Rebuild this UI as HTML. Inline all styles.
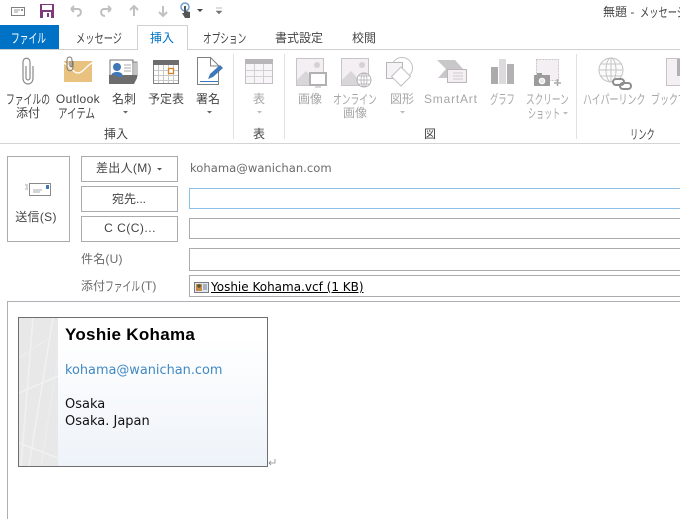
<!DOCTYPE html>
<html lang="ja"><head><meta charset="utf-8">
<style>
html,body{margin:0;padding:0;background:#fff}
#p{position:relative;width:680px;height:519px;overflow:hidden;background:#fff;font-family:"Liberation Sans","Noto Sans CJK JP",sans-serif;font-size:12px;color:#444}
.t{position:absolute;white-space:nowrap;line-height:15px}
.c{text-align:center;transform:translateX(-50%)}
.g{color:#a6a6a6}
.s{transform-origin:0 0;font-size:13px}
.d{font-family:"DejaVu Sans","Noto Sans CJK JP",sans-serif}
.b{position:absolute;box-sizing:border-box;border:1px solid #ababab;background:#fff}
.l{position:absolute;background:#e1e1e1;width:1px;top:54px;height:85px}
svg{position:absolute;left:0;top:0}
</style></head><body><div id="p">
<svg width="680" height="150" viewBox="0 0 680 150" fill="none">
<!-- QAT -->
<rect x="11.500" y="7.500" width="13" height="8" stroke="#808080"/><path d="M14 10h6M14 12h4" stroke="#999"/><rect x="21" y="9" width="2" height="2" fill="#999"/>
<rect x="40" y="4" width="14" height="14" fill="#80397b"/><rect x="42" y="5" width="10" height="5" fill="#fff"/><rect x="43" y="12" width="8" height="6" fill="#fff"/><rect x="47" y="13" width="2" height="4" fill="#80397b"/>
<path d="M71 9h7c4 0 4 7-1 7M71 9l3-3M71 9l3 3" stroke="#c0c0c0" stroke-width="2"/>
<path d="M111 9h-7c-4 0-4 7 1 7M111 9l-3-3M111 9l-3 3" stroke="#c0c0c0" stroke-width="2"/>
<path d="M134 16V7M130 10l4-4 4 4" stroke="#c0c0c0" stroke-width="2"/>
<path d="M163 6v9M159 12l4 4 4-4" stroke="#c0c0c0" stroke-width="2"/>
<circle cx="185" cy="7" r="4" stroke="#6f9fd0" stroke-width="1.500"/><path d="M184 6h2v5l4 1v6h-5l-3-5h2z" fill="#555"/>
<path d="M197 9h6l-3 3z" fill="#444"/><path d="M216 8h6M216 11h6l-3 3z" fill="#777" stroke="#777" stroke-width=".5"/>
<!-- tabs -->
<rect x="0" y="25" width="59" height="25" fill="#0072c6"/>
<path d="M0 49.500H137.500V25.500H187.500V49.500H680" stroke="#d0d0d0"/>
<path d="M0 143.500H680" stroke="#d4d4d4"/>
<!-- clip -->
<path d="M26 66V78c0 2.500 4 2.500 4 0V62c0-5-7-5-7 0V78c0 8 10 8 10 0V66" stroke="#8a8a8a" stroke-width="1.200"/>
<!-- Outlook -->
<path d="M64 61h28v21H64z" fill="#e9c27f"/><path d="M64 63c9 5 9 10 14 10 5 0 8-7 14-10" stroke="#fff" stroke-width="1.300"/>
<path d="M73 61v6c0 5-6 5-6 0v-7c0-4 5-4 5 0v6c0 1-2 1-2 0v-5" stroke="#777" fill="#fff" fill-opacity=".3"/>
<!-- card -->
<rect x="110" y="60" width="23" height="17" fill="#fff" stroke="#777"/><path d="M132 62h3v16h-2M135 62h2v15" stroke="#888"/>
<circle cx="117" cy="67" r="4" fill="#3f78b8"/><path d="M111 77c0-4 3-5 6-5s6 1 6 5z" fill="#3f78b8"/><path d="M124 65h7M124 68h7M124 71h7" stroke="#aaa"/>
<path d="M109 75h7l1 2h5l1-2h14v3l-3 6h-25z" fill="#6d6d6d"/>
<!-- calendar -->
<rect x="153.500" y="60.500" width="25" height="23" fill="#fff" stroke="#808080"/><rect x="153" y="60" width="26" height="5" fill="#6d6d6d"/>
<path d="M158.500 65v18M163.500 65v18M168.500 65v18M173.500 65v18M154 70.500h24M154 75.500h24M154 80.500h24" stroke="#c8c8c8"/>
<rect x="168.500" y="68.500" width="5" height="5" fill="#fff" stroke="#d98324" stroke-width="1.300"/>
<!-- signature -->
<path d="M197.500 84.500V57.500H210.500L218.500 65.500V84.500Z" fill="#fff" stroke="#808080"/><path d="M210.500 58v8h8" stroke="#808080"/>
<path d="M200 81.500h18" stroke="#3f78b8"/><path d="M208 79l2-5 10-9 3 3-10 9z" fill="#3f78b8"/>
<!-- table -->
<rect x="245.500" y="59.500" width="27" height="24" fill="#f7f5f7" stroke="#c2c0c2"/><rect x="245" y="59" width="28" height="5" fill="#b8b6b8"/>
<path d="M254.500 64v19M263.500 64v19M246 70.500h26M246 76.500h26" stroke="#d2d0d2"/>
<!-- image -->
<rect x="296.500" y="58.500" width="27" height="27" fill="#f3eff3" stroke="#c6c4c6"/><circle cx="317" cy="65" r="3" fill="#d4d2d4"/><path d="M297 85v-5l9-9 9 10v4z" fill="#d8d6d8"/>
<rect x="310" y="73" width="16" height="12" fill="#fff" stroke="#b2b0b2" stroke-width="2"/><path d="M315 87h6" stroke="#b2b0b2"/>
<rect x="341.500" y="58.500" width="27" height="27" fill="#f3eff3" stroke="#c6c4c6"/><circle cx="362" cy="65" r="3" fill="#d4d2d4"/><path d="M342 85v-5l9-9 9 10v4z" fill="#d8d6d8"/>
<circle cx="364" cy="80" r="7" fill="#fff" stroke="#b2b0b2"/><path d="M357 80h14M364 73v14M359 76h10M359 84h10" stroke="#b2b0b2" stroke-width=".8"/><ellipse cx="364" cy="80" rx="3" ry="7" stroke="#b2b0b2" stroke-width=".8"/>
<!-- shapes -->
<circle cx="402" cy="68" r="10.500" fill="#fff" stroke="#c2c0c2"/><rect x="386.500" y="62.500" width="16" height="16" fill="#f5f3f5" stroke="#b8b6b8"/><path d="M401 67l9.500 9.500-9.500 9.500-9.500-9.500z" fill="#fff" stroke="#c2c0c2"/>
<!-- smartart -->
<path d="M437 60h18l9 10h-13v8h-13l8-9z" fill="#c9c7c9"/><rect x="447.500" y="69.500" width="19" height="13" fill="#f3eff3" stroke="#b8b6b8"/><path d="M453 73h10M453 76h10M453 79h10" stroke="#ccc"/>
<!-- chart -->
<rect x="491" y="67" width="7" height="17" fill="#ababab"/><rect x="499" y="59" width="7" height="25" fill="#dcdadc"/><rect x="507" y="64" width="7" height="20" fill="#b2b2b2"/>
<!-- screenshot -->
<rect x="536.500" y="59.500" width="22" height="21" fill="#f3eff3" stroke="#c6c4c6" stroke-dasharray="2 1"/>
<rect x="534" y="75" width="16" height="11" fill="#9c9c9c"/><rect x="537" y="73" width="5" height="3" fill="#9c9c9c"/><circle cx="542" cy="81" r="2.800" fill="#e8e8e8" stroke="#fff"/>
<path d="M554 83h7M557.500 79v7" stroke="#a8a8a8" stroke-width="1.600"/>
<!-- link -->
<circle cx="611" cy="70" r="12" fill="#fbfbfb" stroke="#c4c4c4"/><ellipse cx="611" cy="70" rx="5" ry="12" stroke="#c4c4c4"/><path d="M599 70h24M611 58v24M601 64h20M601 76h20" stroke="#c4c4c4"/>
<rect x="613" y="79" width="11" height="6" rx="3" fill="#fff" stroke="#8d8d8d" stroke-width="2"/><rect x="620" y="83" width="11" height="6" rx="3" fill="none" stroke="#8d8d8d" stroke-width="2"/>
<rect x="666.500" y="58.500" width="20" height="27" fill="#f3eff3" stroke="#c6c4c6"/><rect x="677" y="59" width="5" height="17" fill="#b2b0b2"/>
<!-- dropdown arrows -->
<path d="M123 111h5l-2.500 2.500zM207 111h5l-2.500 2.500z" fill="#666"/>
<path d="M257 111h5l-2.500 2.500zM400 111h5l-2.500 2.500zM563 112h5l-2.500 2.500z" fill="#bbb"/>
</svg>

<div class="t" style="left:603px;top:5px">無題 -</div>
<div class="t s" style="left:640px;top:5px;transform:scaleX(.71)">メッセージ</div>
<div class="t s" style="left:11px;top:31px;color:#fff;transform:scaleX(.674)">ファイル</div>
<div class="t s" style="left:76px;top:31px;transform:scaleX(.71)">メッセージ</div>
<div class="t" style="left:150px;top:31px;color:#0072c6">挿入</div>
<div class="t s" style="left:203px;top:31px;transform:scaleX(.665)">オプション</div>
<div class="t" style="left:275px;top:31px">書式設定</div>
<div class="t" style="left:352px;top:31px">校閲</div>

<div class="t s" style="left:6px;top:92px;transform:scaleX(.677)">ファイルの</div>
<div class="t c" style="left:28px;top:106px">添付</div>
<div class="t c" style="left:78px;top:92px;letter-spacing:.4px">Outlook</div>
<div class="t s" style="left:58px;top:106px;transform:scaleX(.73)">アイテム</div>
<div class="t c" style="left:124px;top:92px">名刺</div>
<div class="t c" style="left:166px;top:92px">予定表</div>
<div class="t c" style="left:208px;top:92px">署名</div>
<div class="t c g" style="left:259px;top:92px">表</div>
<div class="t c g" style="left:310px;top:92px">画像</div>
<div class="t s g" style="left:333px;top:92px;transform:scaleX(.674)">オンライン</div>
<div class="t c g" style="left:355px;top:106px">画像</div>
<div class="t c g" style="left:402px;top:92px">図形</div>
<div class="t g" style="left:424px;top:92px;letter-spacing:.8px">SmartArt</div>
<div class="t s g" style="left:490px;top:92px;transform:scaleX(.637)">グラフ</div>
<div class="t s g" style="left:526px;top:92px;transform:scaleX(.665)">スクリーン</div>
<div class="t s g" style="left:528px;top:106px;transform:scaleX(.62)">ショット</div>
<div class="t s g" style="left:583px;top:92px;transform:scaleX(.69)">ハイパーリンク</div>
<div class="t s g" style="left:651px;top:92px;transform:scaleX(.69)">ブックマーク</div>
<div class="t c" style="left:116px;top:127px">挿入</div>
<div class="t c" style="left:259px;top:127px">表</div>
<div class="t c" style="left:430px;top:127px">図</div>
<div class="t s" style="left:630px;top:127px;transform:scaleX(.637)">リンク</div>
<div class="l" style="left:233px"></div><div class="l" style="left:284px"></div><div class="l" style="left:576px"></div>

<div class="b" style="left:7px;top:156px;width:63px;height:86px"></div>
<svg width="70" height="242" viewBox="0 0 70 242" fill="none"><rect x="29.500" y="183.500" width="21" height="12" fill="#fff" stroke="#8a8a8a"/><path d="M33 190h9M33 192h7M25 185h3M26 187h2M25 189h3" stroke="#aaa"/><rect x="46" y="185" width="3" height="4" fill="#3f78b8"/></svg>
<div class="t c" style="left:36px;top:210px;letter-spacing:.3px">送信(S)</div>
<div class="b" style="left:81px;top:156px;width:97px;height:26px"></div>
<div class="t" style="left:96px;top:161px;letter-spacing:.3px">差出人(M)</div>
<svg width="170" height="175" viewBox="0 0 170 175"><path d="M157 168h5l-2.500 2.500z" fill="#555"/></svg>
<div class="b" style="left:81px;top:186px;width:97px;height:26px"></div>
<div class="t c" style="left:129px;top:192px">宛先...</div>
<div class="b" style="left:81px;top:216px;width:97px;height:26px"></div>
<div class="t c" style="left:130px;top:221px;letter-spacing:.5px">C C(C)...</div>
<div class="t" style="left:81px;top:252px;color:#6a6a6a;letter-spacing:.2px">件名(U)</div>
<div class="t" style="left:81px;top:279px;color:#6a6a6a">添付</div>
<div class="t s" style="left:105px;top:279px;color:#6a6a6a;transform:scaleX(.674)">ファイル</div>
<div class="t" style="left:141px;top:279px;color:#6a6a6a">(T)</div>
<div class="t d" style="left:190px;top:161px;color:#6a6a6a;font-size:11.600px">kohama@wanichan.com</div>
<div class="b" style="left:189px;top:188px;width:500px;height:21px;border-color:#8cc0e8"></div>
<div class="b" style="left:189px;top:218px;width:500px;height:21px"></div>
<div class="b" style="left:189px;top:248px;width:500px;height:23px"></div>
<div class="b" style="left:189px;top:275px;width:500px;height:22px"></div>
<svg width="210" height="295" viewBox="0 0 210 295" fill="none"><rect x="194.500" y="282.500" width="14" height="10" fill="#dfe9f5" stroke="#7a7a7a"/><rect x="196" y="284" width="6" height="7" fill="#c98a4a"/><circle cx="199" cy="286" r="1.800" fill="#553"/><path d="M203 285h4M203 287h4M203 289h4" stroke="#778"/></svg>
<div class="t d" style="left:211px;top:280px;color:#000;text-decoration:underline;font-size:12px">Yoshie Kohama.vcf (1 KB)</div>

<div class="b" style="left:7px;top:301px;width:700px;height:240px;border-color:#aeb0b8"></div>
<div style="position:absolute;left:18px;top:317px;width:250px;height:150px;box-sizing:border-box;border:1px solid #6e6e6e;background:linear-gradient(#fff 12%,#eef3f9);overflow:hidden">
<div style="position:absolute;left:0;top:0;width:39px;height:148px;background:#e8e8e8"></div>
<svg width="39" height="148" viewBox="0 0 39 148" fill="none" style="left:0;top:0"><path d="M0 75L39 58M2 148L14 0M10 148L34 0M0 125L39 140" stroke="#f1f1f1" stroke-width="1.500"/><path d="M22 148L39 40M0 40L30 20" stroke="#eeeeee"/></svg>
<div class="t" style="left:46px;top:7px;font-size:17px;line-height:20px;font-weight:bold;color:#000;letter-spacing:.3px">Yoshie Kohama</div>
<div class="t d" style="left:46px;top:44.500px;font-size:12.900px;color:#4189c4">kohama@wanichan.com</div>
<div class="t d" style="left:46px;top:78px;font-size:13px;color:#111;line-height:17px">Osaka<br>Osaka. Japan</div>
</div>
<svg width="280" height="470" viewBox="0 0 280 470" fill="none"><path d="M275 459v4h-6M271 461l-2 2 2 2" stroke="#888" stroke-width=".8"/></svg>
</div></body></html>
